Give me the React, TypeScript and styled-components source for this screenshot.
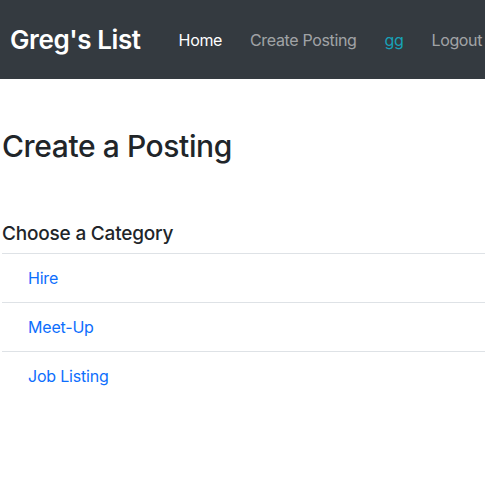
import styled, { createGlobalStyle } from "styled-components";

const Global = createGlobalStyle`
  body {
    margin: 0;
    font-family: Inter, "Noto Sans", sans-serif;
    color: #212529;
    background: #fff;
  }
`;

const Navbar = styled.nav`
  height: 79px;
  background: #343a40;
  display: flex;
  align-items: center;
  padding: 0 10px;
  white-space: nowrap;
  overflow: hidden;
`;

const Brand = styled.a`
  font-size: 26px;
  font-weight: 600;
  color: #fff;
  text-decoration: none;
  margin-right: 38px;
  letter-spacing: -0.4px;
`;

const NavList = styled.div`
  display: flex;
  gap: 28px;
`;

const NavLink = styled.a<{ $tone: "active" | "muted" | "info" }>`
  font-size: 16px;
  letter-spacing: -0.35px;
  text-decoration: none;
  color: ${(p) =>
    p.$tone === "active" ? "#fff" : p.$tone === "info" ? "#17a2b8" : "rgba(255,255,255,0.55)"};
`;

const Main = styled.main`
  padding: 0 0 0 2px;
`;

const Title = styled.h1`
  font-size: 30px;
  font-weight: 500;
  letter-spacing: -0.4px;
  margin: 49px 0 0;
  line-height: 36px;
`;

const Subtitle = styled.h5`
  font-size: 19px;
  font-weight: 500;
  letter-spacing: -0.2px;
  margin: 58px 0 0;
  line-height: 24px;
  padding-bottom: 7px;
  border-bottom: 1px solid #dee2e6;
`;

const Item = styled.div<{ $last?: boolean }>`
  height: 48px;
  display: flex;
  align-items: center;
  padding-left: 26px;
  border-bottom: ${(p) => (p.$last ? "none" : "1px solid #dee2e6")};
`;

const ItemLink = styled.a`
  font-size: 16px;
  letter-spacing: -0.2px;
  color: #0d6efd;
  text-decoration: none;
`;

export default function App() {
  const categories = ["Hire", "Meet-Up", "Job Listing"];
  return (
    <>
      <Global />
      <Navbar>
        <Brand href="#">Greg's List</Brand>
        <NavList>
          <NavLink $tone="active" href="#">Home</NavLink>
          <NavLink $tone="muted" href="#">Create Posting</NavLink>
          <NavLink $tone="info" href="#">gg</NavLink>
          <NavLink $tone="muted" href="#">Logout</NavLink>
        </NavList>
      </Navbar>
      <Main>
        <Title>Create a Posting</Title>
        <Subtitle>Choose a Category</Subtitle>
        {categories.map((c, i) => (
          <Item key={c} $last={i === categories.length - 1}>
            <ItemLink href="#">{c}</ItemLink>
          </Item>
        ))}
      </Main>
    </>
  );
}
